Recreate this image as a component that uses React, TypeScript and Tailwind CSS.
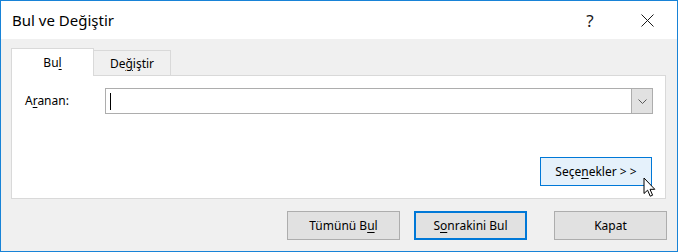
import React from "react";

const font = { fontFamily: '"Segoe UI", "Noto Sans", "Open Sans", sans-serif' };

function Btn({
  children,
  focused,
  className = "",
}: {
  children: React.ReactNode;
  focused?: boolean;
  className?: string;
}) {
  return (
    <div
      className={
        "h-[29px] w-[113px] flex items-center justify-center bg-[#e1e1e1] text-[12px] text-black " +
        (focused ? "border-2 border-[#0078d7] " : "border border-[#adadad] ") +
        className
      }
    >
      {children}
    </div>
  );
}

function U({ children }: { children: React.ReactNode }) {
  return <span className="underline decoration-1 underline-offset-[2px]">{children}</span>;
}

export default function App() {
  return (
    <div
      className="w-[678px] h-[252px] border border-[#1883d7] bg-[#f0f0f0] flex flex-col relative overflow-hidden select-none"
      style={font}
    >
      {/* Title bar */}
      <div className="h-[38px] bg-white flex items-center pl-[11px] pr-[7px] shrink-0">
        <div className="text-[15px] text-black leading-none">Bul ve Değiştir</div>
        <div className="ml-auto flex items-center">
          <div className="w-[46px] h-[30px] flex items-center justify-center mr-[11px] text-[17px] text-[#1a1a1a] leading-none">
            ?
          </div>
          <div className="w-[46px] h-[30px] flex items-center justify-center">
            <svg width="13" height="13" viewBox="0 0 13 13">
              <path d="M0.5 0.5 L12.5 12.5 M12.5 0.5 L0.5 12.5" stroke="#1a1a1a" strokeWidth="1" />
            </svg>
          </div>
        </div>
      </div>

      {/* Body */}
      <div className="pt-[9px] flex flex-col">
        {/* Tabs */}
        <div className="flex items-end h-[27px] ml-[10px]">
          <div className="relative z-10 w-[83px] h-[28px] -mb-[1px] bg-white border-l border-t border-r border-[#d9d9d9] flex items-center justify-center text-[12px] text-black">
            <span>
              Bu<U>l</U>
            </span>
          </div>
          <div className="w-[77px] h-[25px] border-t border-r border-[#d9d9d9] bg-[#f0f0f0] flex items-center justify-center text-[12px] text-black pt-[1px]">
            <span>
              De<U>ğ</U>iştir
            </span>
          </div>
        </div>

        {/* Panel */}
        <div className="ml-[10px] w-[655px] h-[124px] bg-white border border-[#d9d9d9] flex flex-col pt-[12px] pl-[13px] pr-[12px]">
          <div className="flex items-center">
            <div className="w-[80px] text-[12px] text-black">
              A<U>r</U>anan:
            </div>
            <div className="flex-1 h-[26px] border border-[#adadad] flex items-stretch">
              <div className="flex-1 flex items-center pl-[4px]">
                <div className="w-[1px] h-[17px] bg-black" />
              </div>
              <div className="w-[21px] bg-[#e1e1e1] border-l border-[#adadad] flex items-center justify-center">
                <svg width="9" height="5" viewBox="0 0 9 5">
                  <path d="M0.5 0.5 L4.5 4.5 L8.5 0.5" fill="none" stroke="#5a5a5a" strokeWidth="1" />
                </svg>
              </div>
            </div>
          </div>
          <div className="flex justify-end mt-[43px] pr-[1px]">
            <div className="h-[29px] w-[112px] bg-[#e5f1fb] border border-[#0078d7] flex items-center justify-center text-[12px] text-black">
              <span>
                Seçe<U>n</U>ekler &gt; &gt;
              </span>
            </div>
          </div>
        </div>

        {/* Bottom buttons */}
        <div className="flex mt-[12px] pr-[10px] justify-end">
          <Btn>
            <span>
              Tümünü B<U>u</U>l
            </span>
          </Btn>
          <Btn focused className="ml-[14px]">
            <span>
              S<U>o</U>nrakini Bul
            </span>
          </Btn>
          <Btn className="ml-[27px]">Kapat</Btn>
        </div>
      </div>

      {/* Mouse cursor */}
      <svg
        className="absolute left-[642px] top-[176px]"
        width="14"
        height="21"
        viewBox="0 0 14 21"
      >
        <path
          d="M1 1 L1 16.5 L4.6 13.2 L7.2 19.2 L9.6 18.2 L7 12.3 L11.8 12.3 Z"
          fill="white"
          stroke="black"
          strokeWidth="1"
          strokeLinejoin="miter"
        />
      </svg>
    </div>
  );
}
